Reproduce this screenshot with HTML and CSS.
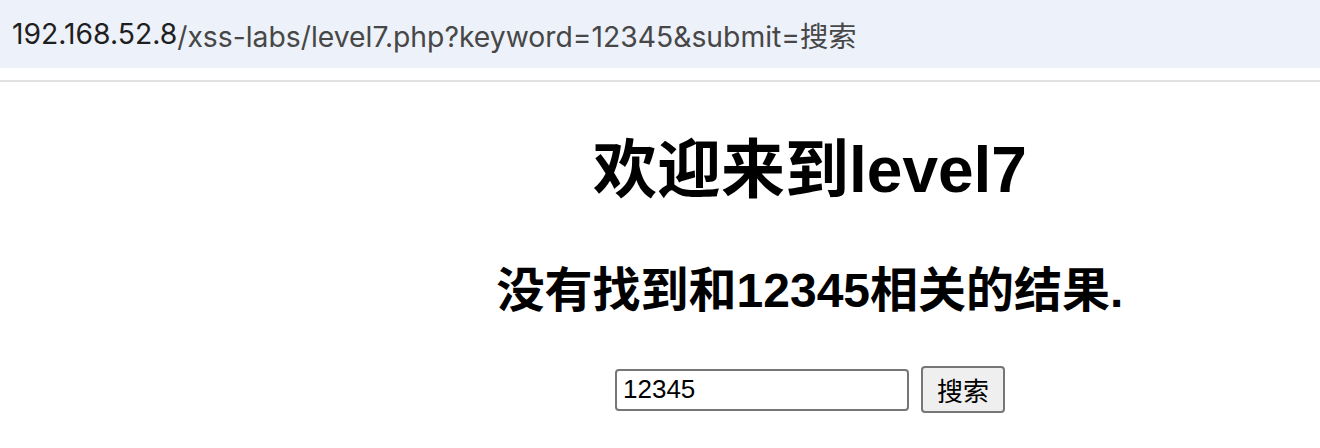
FILE: index.html
```html
<!DOCTYPE html>
<html lang="zh-CN">
<head>
<meta charset="utf-8">
<title>level7</title>
<link rel="stylesheet" href="styles.css">
</head>
<body>
<div class="urlbar">
  <span class="host">192.168.52.8</span><span class="path">/xss-labs/level7.php?keyword=12345&amp;submit=搜索</span>
</div>
<div class="divider"></div>
<main class="page">
  <h1 class="title">欢迎来到level7</h1>
  <h2 class="result">没有找到和12345相关的结果.</h2>
  <form class="search">
    <input class="field" type="text" value="12345">
    <button class="btn" type="button">搜索</button>
  </form>
</main>
</body>
</html>
```
FILE: styles.css
```css
html, body {
  margin: 0;
  padding: 0;
  background: #ffffff;
  overflow: hidden;
}
body {
  width: 1320px;
  height: 448px;
  font-family: "Liberation Sans", "Noto Sans CJK SC", sans-serif;
  color: #000;
}
.urlbar {
  height: 68px;
  background: #edf1f9;
  display: flex;
  align-items: center;
  padding-left: 12px;
  font-family: Inter, "Noto Sans CJK SC", sans-serif;
  font-size: 28.3px;
  white-space: nowrap;
}
.host { color: #1f1f1f; }
.path { color: #474747; }
.divider {
  height: 12px;
  border-bottom: 2px solid #e1e1e1;
}
.page {
  margin-left: 300px;
  width: 1020px;
  display: flex;
  flex-direction: column;
  align-items: center;
}
.title {
  margin: 51px 0 0;
  font-size: 64px;
  line-height: 74px;
  font-weight: bold;
}
.result {
  margin: 56px 0 0;
  font-size: 48px;
  line-height: 56px;
  font-weight: bold;
}
.search {
  margin-top: 47px;
  display: flex;
  align-items: center;
  gap: 12px;
}
.field {
  box-sizing: border-box;
  width: 294px;
  height: 42px;
  border: 2px solid #767676;
  border-radius: 4px;
  padding: 0 6px;
  font-family: "Liberation Sans", sans-serif;
  font-size: 26px;
  color: #000;
  background: #fff;
}
.btn {
  box-sizing: border-box;
  width: 84px;
  height: 47px;
  border: 2px solid #767676;
  border-radius: 4px;
  background: #efefef;
  font-family: "Noto Sans CJK SC", sans-serif;
  font-size: 26px;
  color: #000;
  padding: 0;
}
```
